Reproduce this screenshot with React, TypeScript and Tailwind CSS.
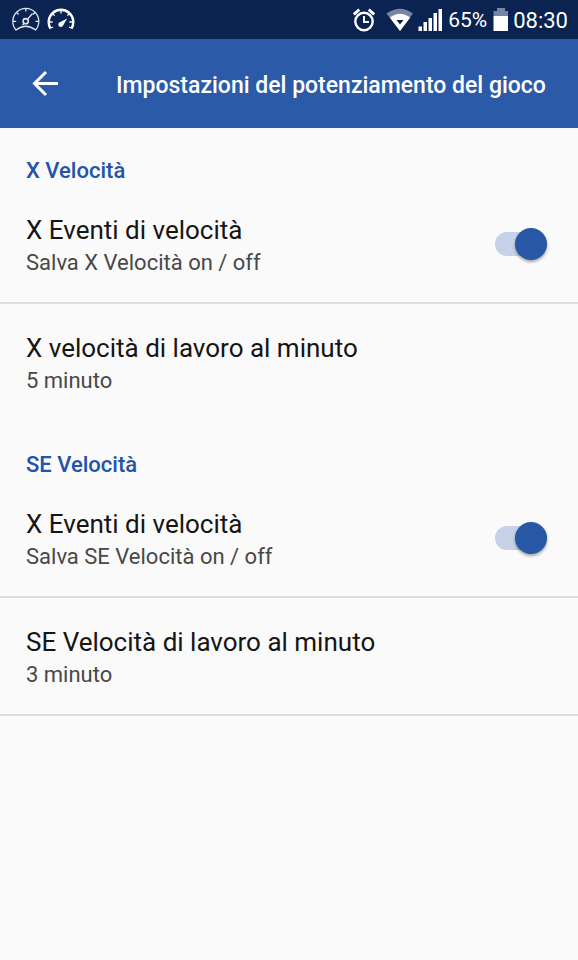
import { useState } from "react";

function DialIcon() {
  return (
    <svg width="30" height="28" viewBox="0 0 30 28" fill="none" stroke="#dfe5ef" strokeWidth="1.3" aria-hidden="true">
      <path d="M5 24A13 13 0 1 1 24.6 24Q14.8 16.5 5 24Z" strokeLinejoin="round" />
      <circle cx="14.7" cy="15.2" r="2.6" strokeWidth="1.6" />
      <path d="M16.6 13.2L21.5 7.5M12.8 17.5l-1.3 1.5" />
      <path d="M14.8 2.5v3M2 15.3h3.2M27.6 15.3h-3.2M5.6 6.5l2 2M24 6.5l-2 2" />
    </svg>
  );
}

function SpeedIcon() {
  return (
    <svg width="28" height="28" viewBox="0 0 28 28" fill="none" stroke="#fff" aria-hidden="true">
      <path d="M3.5 22.5A12.3 12.3 0 1 1 24.5 22.5" strokeWidth="2.4" />
      <path d="M14 4v3.4M2 16h3.600M26 16h-3.600M5.800 7.800l1.800 1.800M22.200 7.800l-1.800 1.800M4 22l2-1M24 22l-2-1" strokeWidth="1.3" />
      <path d="M20.2 12.6L16.2 19.2A2.5 2.5 0 1 1 13.400 16Z" fill="#fff" stroke="none" />
    </svg>
  );
}

function AlarmIcon() {
  return (
    <svg width="24" height="24" viewBox="0 0 24 24" fill="none" stroke="#fff" aria-hidden="true">
      <circle cx="12" cy="13.5" r="8.7" strokeWidth="2.4" />
      <path d="M12 8v6h5" strokeWidth="2" />
      <path d="M1.8 6.4L7.3 1.6M22.2 6.4L16.7 1.6" strokeWidth="2.8" />
    </svg>
  );
}

function WifiIcon() {
  return (
    <svg width="28" height="24" viewBox="0 0 28 24" aria-hidden="true">
      <path d="M0.500 5.500Q14 -4 27 5.500L14 23Z" fill="#7685a3" />
      <path d="M3.800 9.500Q14 1.800 24.200 9.500L14 23Z" fill="#fff" />
      <path d="M10.5 12h7L14 16.5Z" fill="#0a2350" />
    </svg>
  );
}

function SignalIcon() {
  return (
    <svg width="24" height="24" viewBox="0 0 24 24" fill="#fff" aria-hidden="true">
      <path d="M0.500 18.500h3.500V23H0.500zM5.500 14h3.500V23H5.500zM10.500 10h3.500v13h-3.500zM15.500 5h3.500v18h-3.500zM20.500 1h3.500v22h-3.500z" />
    </svg>
  );
}

function BatteryIcon() {
  return (
    <svg width="16" height="24" viewBox="0 0 16 24" aria-hidden="true">
      <path d="M4 0h8v3h3v6H0.500V3H4z" fill="#7685a3" />
      <path d="M0.500 8h14.500v15H0.500z" fill="#fff" />
    </svg>
  );
}

function StatusBar() {
  return (
    <div className="flex h-[39px] items-center justify-between bg-[#0a2350] pr-[10px] pl-[11px] text-white">
      <div className="flex items-center gap-[6px]">
        <DialIcon />
        <SpeedIcon />
      </div>
      <div className="flex items-center gap-1">
        <div className="mr-[2px] flex items-center gap-1">
          <div className="mr-[6px]">
            <AlarmIcon />
          </div>
          <WifiIcon />
          <SignalIcon />
        </div>
        <span className="mr-[2px] pt-[2px] text-[21px]">65%</span>
        <BatteryIcon />
        <span className="pt-[2px] text-[22px]">08:30</span>
      </div>
    </div>
  );
}

function Header() {
  return (
    <header className="flex h-[89px] items-center bg-[#2b5aa8] px-8 text-white">
      <button type="button" aria-label="Indietro" className="shrink-0">
        <svg width="28" height="28" viewBox="0 0 28 28" fill="none" stroke="#fff" strokeWidth="3" aria-hidden="true">
          <path d="M14 2L2.5 13.5L14 25M2.5 13.5H26" />
        </svg>
      </button>
      <h1 className="ml-14 pt-1 text-[23px] leading-8 font-medium whitespace-nowrap">Impostazioni del potenziamento del gioco</h1>
    </header>
  );
}

function SectionTitle({ children }: { children: string }) {
  return <h2 className="px-[26px] pt-7 text-[22px] leading-[30px] font-medium text-[#2354a6]">{children}</h2>;
}

const titleClass = "block text-[26px] leading-8 text-[#151515]";
const detailClass = "block text-[22px] leading-[34px] text-[#484848]";

function SwitchRow({ id, title, detail }: { id: string; title: string; detail: string }) {
  const [on, setOn] = useState(true);
  return (
    <div className="flex h-[118px] items-center justify-between border-b-2 border-[#dedede] px-[26px]">
      <label htmlFor={id} className="pt-[6px]">
        <span className={titleClass}>{title}</span>
        <span className={detailClass}>{detail}</span>
      </label>
      <input
        id={id}
        type="checkbox"
        role="switch"
        checked={on}
        onChange={(e) => setOn(e.target.checked)}
        className="mr-[5px] flex h-6 w-[52px] shrink-0 appearance-none items-center rounded-full bg-[#cfcfcf] before:size-8 before:shrink-0 before:rounded-full before:bg-[#f1f1f1] before:shadow-[0_2px_3px_rgba(0,0,0,0.35)] checked:bg-[#c5d2e7] checked:before:ml-5 checked:before:bg-[#2857a5]"
      />
    </div>
  );
}

function ValueRow({ title, detail, divider }: { title: string; detail: string; divider?: boolean }) {
  return (
    <button
      type="button"
      className={`flex h-[118px] w-full flex-col justify-center border-b-2 px-[26px] pt-[6px] text-left ${divider ? "border-[#dedede]" : "border-transparent"}`}
    >
      <span className={titleClass}>{title}</span>
      <span className={detailClass}>{detail}</span>
    </button>
  );
}

export default function App() {
  return (
    <div className="min-h-screen bg-[#fafafa] font-[Roboto,sans-serif]">
      <StatusBar />
      <Header />
      <main>
        <section>
          <SectionTitle>X Velocità</SectionTitle>
          <SwitchRow id="x-events" title="X Eventi di velocità" detail="Salva X Velocità on / off" />
          <ValueRow title="X velocità di lavoro al minuto" detail="5 minuto" />
        </section>
        <section>
          <SectionTitle>SE Velocità</SectionTitle>
          <SwitchRow id="se-events" title="X Eventi di velocità" detail="Salva SE Velocità on / off" />
          <ValueRow title="SE Velocità di lavoro al minuto" detail="3 minuto" divider />
        </section>
      </main>
    </div>
  );
}
